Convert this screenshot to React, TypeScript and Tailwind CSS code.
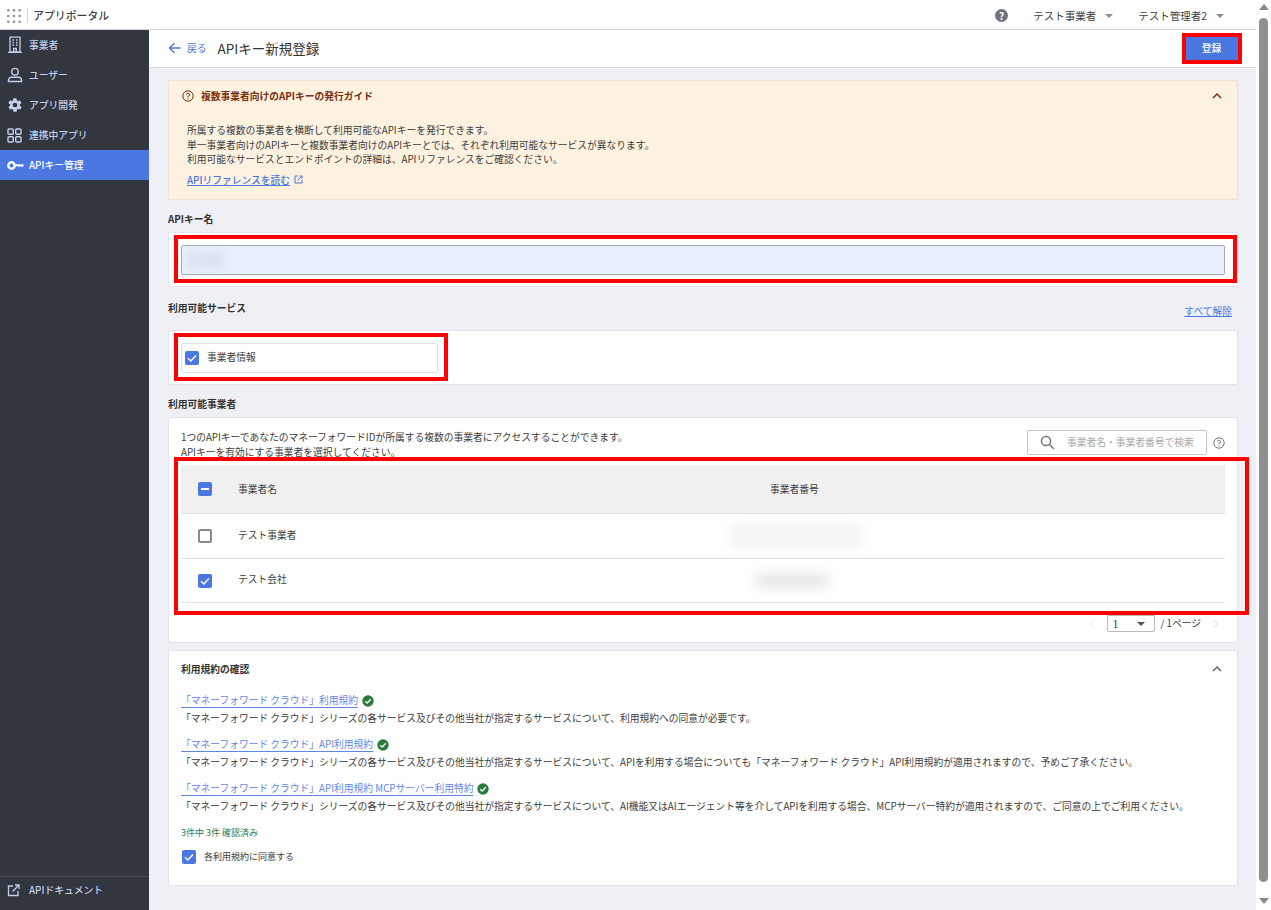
import React from "react";

const font = { fontFamily: '"Noto Sans CJK JP", "Noto Sans", sans-serif' };

function Check({ size = 14 }: { size?: number }) {
  return (
    <span className="flex shrink-0 items-center justify-center rounded-[2px] bg-[#4a78e0]" style={{ width: size, height: size }}>
      <svg width={size} height={size} viewBox="0 0 14 14" fill="none">
        <path d="M3 7.2 L5.8 10 L11 4.4" stroke="#fff" strokeWidth="1.4" />
      </svg>
    </span>
  );
}

function GreenCheck() {
  return (
    <svg width="12" height="12" viewBox="0 0 12 12" className="shrink-0">
      <circle cx="6" cy="6" r="5.7" fill="#2a7a3b" />
      <path d="M3.2 6.2 L5.2 8 L8.8 4.2" stroke="#fff" strokeWidth="1.3" fill="none" />
    </svg>
  );
}

function Caret() {
  return <span className="ml-[9px] h-0 w-0 border-x-[4px] border-t-[4px] border-x-transparent border-t-[#8a8f99]" />;
}

function Chevron({ color }: { color: string }) {
  return (
    <svg width="12" height="8" viewBox="0 0 12 8" fill="none">
      <path d="M2 6 L6 2 L10 6" stroke={color} strokeWidth="1.5" />
    </svg>
  );
}

const navItems = [
  {
    label: "事業者",
    icon: (
      <svg width="16" height="18" viewBox="0 0 16 18" fill="none" stroke="#c3cfe8" strokeWidth="1.3">
        <path d="M3 1.2 H13 V16 H3 Z M1 16.4 H15" />
        <path d="M6.7 16 V12.5 H9.3 V16" />
        <path d="M5.5 4 H7 M9 4 H10.5 M5.5 6.5 H7 M9 6.5 H10.5 M5.5 9 H7 M9 9 H10.5" />
      </svg>
    ),
  },
  {
    label: "ユーザー",
    icon: (
      <svg width="16" height="16" viewBox="0 0 16 16" fill="none" stroke="#c3cfe8" strokeWidth="1.4">
        <circle cx="8" cy="4.7" r="3.3" />
        <path d="M4.5 10.3 H11.5 A3 3 0 0 1 14.5 13.3 V14.5 H1.5 V13.3 A3 3 0 0 1 4.5 10.3 Z" />
      </svg>
    ),
  },
  {
    label: "アプリ開発",
    icon: (
      <svg width="16" height="16" viewBox="0 0 24 24" fill="#c3cfe8">
        <path d="M19.4 13a7.5 7.5 0 0 0 0-2l2.1-1.6a.5.5 0 0 0 .1-.6l-2-3.5a.5.5 0 0 0-.6-.2l-2.5 1a7.4 7.4 0 0 0-1.7-1l-.4-2.7a.5.5 0 0 0-.5-.4h-4a.5.5 0 0 0-.5.4l-.4 2.7a7.4 7.4 0 0 0-1.7 1l-2.5-1a.5.5 0 0 0-.6.2l-2 3.5a.5.5 0 0 0 .1.6L4.6 11a7.5 7.5 0 0 0 0 2l-2.1 1.6a.5.5 0 0 0-.1.6l2 3.5c.1.2.4.3.6.2l2.5-1a7.4 7.4 0 0 0 1.7 1l.4 2.7c0 .2.3.4.5.4h4c.2 0 .5-.2.5-.4l.4-2.7a7.4 7.4 0 0 0 1.7-1l2.5 1c.2.1.5 0 .6-.2l2-3.5a.5.5 0 0 0-.1-.6zM12 15.5a3.5 3.5 0 1 1 0-7 3.5 3.5 0 0 1 0 7z" />
      </svg>
    ),
  },
  {
    label: "連携中アプリ",
    icon: (
      <svg width="15" height="15" viewBox="0 0 15 15" fill="none" stroke="#c3cfe8" strokeWidth="1.4">
        <rect x="1" y="1" width="5.3" height="5.3" rx="1" />
        <rect x="8.7" y="1" width="5.3" height="5.3" rx="1" />
        <rect x="1" y="8.7" width="5.3" height="5.3" rx="1" />
        <rect x="8.7" y="8.7" width="5.3" height="5.3" rx="1" />
      </svg>
    ),
  },
];

function Sidebar() {
  return (
    <aside className="flex w-[149px] shrink-0 flex-col bg-[#31363f]">
      {navItems.map((n) => (
        <div key={n.label} className="flex h-[30px] items-center text-[9.75px] font-medium text-[#c3cfe8]">
          <span className="flex w-[29px] justify-center">{n.icon}</span>
          <span>{n.label}</span>
        </div>
      ))}
      <div className="flex h-[30px] items-center bg-[#4a78e0] text-[9.75px] font-medium text-white">
        <span className="flex w-[29px] justify-center pl-[1px]">
          <svg width="17" height="9" viewBox="0 0 17 9" fill="none">
            <circle cx="4.5" cy="4.5" r="3.2" stroke="#fff" strokeWidth="2.4" />
            <path d="M8 3.2 H16.5 V5.2 L15 6 L13.8 5.2 L12.6 6 L11.4 5.2 H8 Z" fill="#fff" />
          </svg>
        </span>
        <span>APIキー管理</span>
      </div>
      <div className="mt-auto flex h-[34px] items-center border-t border-[#464b55] pb-[6px] text-[9.75px] font-medium text-[#c3cfe8]">
        <span className="flex w-[27px] justify-center">
          <svg width="13" height="13" viewBox="0 0 13 13" fill="none" stroke="#c3cfe8" strokeWidth="1.3">
            <path d="M6 2 H1.5 V11.5 H11 V7" />
            <path d="M5.5 7.5 L12 1 M8 1 H12 V5" />
          </svg>
        </span>
        <span className="ml-[2px]">APIドキュメント</span>
      </div>
    </aside>
  );
}

function Header() {
  return (
    <header className="flex h-[30px] shrink-0 items-center border-b border-[#d4d5da] bg-white pt-[2px] text-[#3c3f45]">
      <svg width="14" height="14" viewBox="0 0 14 14" fill="#8f9198" className="ml-[7px]">
        {[1.3, 7, 12.7].flatMap((y) => [1.3, 7, 12.7].map((x) => <circle key={`${x}-${y}`} cx={x} cy={y} r="1.3" />))}
      </svg>
      <span className="ml-[6px] h-[15px] w-px bg-[#d4d5d9]" />
      <span className="ml-[5px] text-[10.9px] font-medium">アプリポータル</span>
      <span className="ml-auto flex h-[13px] w-[13px] items-center justify-center rounded-full bg-[#70747f] text-[10px] font-bold leading-none text-white">?</span>
      <span className="ml-[25px] flex items-center text-[10.5px]">テスト事業者<Caret /></span>
      <span className="ml-[25px] mr-[32px] flex items-center text-[10.5px]">テスト管理者2<Caret /></span>
    </header>
  );
}

function SubHeader() {
  return (
    <div className="relative flex h-[38px] shrink-0 items-center border-b border-[#d9dbe0] bg-white pb-[1px] pl-[19px] pr-[18px]">
      <svg width="13" height="12" viewBox="0 0 13 12" fill="none" stroke="#4a78e0" strokeWidth="1.4">
        <path d="M12.5 6 H1.5 M6.5 1 L1.5 6 L6.5 11" />
      </svg>
      <span className="ml-[6px] text-[9.75px] text-[#4a78e0]">戻る</span>
      <span className="ml-[11px] text-[13.5px] text-[#333]">APIキー新規登録</span>
      <button className="ml-auto flex h-[24px] w-[52px] items-center justify-center bg-[#4a78e0] pr-[1px] text-[9.75px] font-medium text-white">登録</button>
      <span className="absolute right-[14px] top-[3px] h-[31px] w-[60px] border-4 border-[#ff0000]" />
    </div>
  );
}

function Alert() {
  return (
    <section className="rounded-[2px] border border-[#e9e5dc] bg-[#fdf1e0] pb-[12px] pl-[18px] pr-[14px] pt-[8px] text-[9.75px] text-[#3c3c3c]">
      <div className="-ml-[5px] flex h-[14px] items-center">
        <svg width="12" height="12" viewBox="0 0 12 12" fill="none" stroke="#7a2e0e">
          <circle cx="6" cy="6" r="5.2" />
          <path d="M4.4 4.6 A1.6 1.6 0 1 1 6 6.4 V7.3 M6 8.4 V9.4" />
        </svg>
        <span className="ml-[7px] font-bold text-[#7a2e0e]">複数事業者向けのAPIキーの発行ガイド</span>
        <span className="ml-auto"><Chevron color="#7a2e0e" /></span>
      </div>
      <div className="mt-[20px] leading-[14.5px]">
        <p>所属する複数の事業者を横断して利用可能なAPIキーを発行できます。</p>
        <p>単一事業者向けのAPIキーと複数事業者向けのAPIキーとでは、それぞれ利用可能なサービスが異なります。</p>
        <p>利用可能なサービスとエンドポイントの詳細は、APIリファレンスをご確認ください。</p>
      </div>
      <div className="mt-[6px] flex items-center font-medium text-[#4a78e0]">
        <span className="underline">APIリファレンスを読む</span>
        <svg width="9" height="9" viewBox="0 0 9 9" fill="none" stroke="#4a78e0" className="ml-[4px]">
          <path d="M4 1 H1 V8 H8 V5 M3.5 5.5 L8 1 M5.5 1 H8 V3.5" />
        </svg>
      </div>
    </section>
  );
}

function NameSection() {
  return (
    <>
      <h2 className="mt-[11px] h-[16px] text-[9.75px] font-bold leading-[16px] text-[#333]">APIキー名</h2>
      <section className="relative mt-[5px] h-[55px] rounded-[2px] border border-[#e3e4e8] bg-white pl-[12px] pr-[12px] pt-[12px]">
        <div className="flex h-[30px] items-center rounded-[2px] border border-[#a3a8b3] bg-[#e8effc] pl-[5px]">
          <div className="h-[18px] w-[38px] rounded-sm bg-[#dbe2f1] blur-[4px]" />
        </div>
        <span className="absolute left-[5px] right-0 top-[2px] h-[48px] border-4 border-[#ff0000]" />
      </section>
    </>
  );
}

function ServiceSection() {
  return (
    <>
      <div className="mt-[13px] flex h-[16px] items-start justify-between">
        <h2 className="text-[9.75px] font-bold leading-[16px] text-[#333]">利用可能サービス</h2>
        <span className="mr-[6px] mt-[5px] text-[9.75px] leading-[13px] text-[#4a78e0] underline">すべて解除</span>
      </div>
      <section className="relative mt-[14px] h-[55px] rounded-[2px] border border-[#e3e4e8] bg-white pl-[12px] pt-[12px]">
        <div className="flex h-[30px] w-[257px] items-center rounded-[2px] border border-[#e0e1e5] pl-[3px] text-[9.75px] text-[#3c3c3c]">
          <Check />
          <span className="ml-[8px] pb-[1px]">事業者情報</span>
        </div>
        <span className="absolute left-[5px] top-[2px] h-[48px] w-[274px] border-4 border-[#ff0000]" />
      </section>
    </>
  );
}

function Row({ box, name, blur, last }: { box: React.ReactNode; name: string; blur: React.ReactNode; last?: boolean }) {
  return (
    <div className={last ? "flex h-[44px] items-center border-b border-[#e2e2e2] text-[9.75px] text-[#3c3c3c]" : "flex h-[45px] items-center border-b border-[#e2e2e2] text-[9.75px] text-[#3c3c3c]"}>
      <span className="flex w-[57px] pl-[17px]">{box}</span>
      <span className="w-[490px] pb-[2px]">{name}</span>
      {blur}
    </div>
  );
}

function CompanySection() {
  return (
    <>
      <h2 className="mt-[11px] h-[16px] text-[9.75px] font-bold leading-[16px] text-[#333]">利用可能事業者</h2>
      <section className="relative mt-[5px] h-[226px] rounded-[2px] border border-[#e3e4e8] bg-white px-[12px] pt-[12px]">
        <div className="flex h-[35px] items-start justify-between">
          <p className="text-[9.75px] leading-[15px] text-[#3c3c3c]">
            1つのAPIキーであなたのマネーフォワードIDが所属する複数の事業者にアクセスすることができます。<br />
            APIキーを有効にする事業者を選択してください。
          </p>
          <div className="flex items-center">
            <div className="flex h-[25px] w-[180px] items-center rounded-[2px] border border-[#c4c5c9] pl-[12px]">
              <svg width="15" height="15" viewBox="0 0 15 15" fill="none" stroke="#777" strokeWidth="1.5">
                <circle cx="6" cy="6" r="4.6" />
                <path d="M9.5 9.5 L14 14" />
              </svg>
              <span className="ml-[12px] text-[9.75px] text-[#a8a8a8]">事業者名・事業者番号で検索</span>
            </div>
            <svg width="12" height="12" viewBox="0 0 12 12" fill="none" stroke="#70747f" className="ml-[6px]">
              <circle cx="6" cy="6" r="5.2" />
              <path d="M4.4 4.6 A1.6 1.6 0 1 1 6 6.4 V7.3 M6 8.4 V9.4" />
            </svg>
          </div>
        </div>
        <div className="flex h-[49px] items-center border-b border-[#e2e2e2] bg-[#f0f0f0] text-[9.75px] text-[#3c3c3c]">
          <span className="flex w-[57px] pb-[1px] pl-[17px]">
            <span className="flex h-[14px] w-[14px] items-center justify-center rounded-[2px] bg-[#4a78e0]">
              <span className="h-[2px] w-[8px] bg-white" />
            </span>
          </span>
          <span className="w-[532px]">事業者名</span>
          <span>事業者番号</span>
        </div>
        <Row
          box={<span className="h-[14px] w-[14px] rounded-[2px] border-2 border-[#8a8a8a]" />}
          name="テスト事業者"
          blur={<div className="h-[28px] w-[135px] rounded-sm bg-[#f7f7f7] blur-[5px]" />}
        />
        <Row
          last
          box={<Check />}
          name="テスト会社"
          blur={<div className="ml-[26px] h-[15px] w-[76px] rounded-full bg-[#e8e8e8] blur-[6px]" />}
        />
        <div className="mt-[12px] flex items-center justify-end pr-[5px] text-[9.75px] text-[#3c3c3c]">
          <svg width="7" height="10" viewBox="0 0 7 10" fill="none" stroke="#e0e0e0" className="mr-[11px]"><path d="M5.5 1 L1.5 5 L5.5 9" /></svg>
          <div className="flex h-[17px] w-[48px] items-center rounded-b-[2px] border border-[#bbb] pl-[5px] pr-[9px]">
            <span className="text-[12px] leading-none" style={{ fontFamily: '"Liberation Serif", serif' }}>1</span>
            <span className="ml-auto h-0 w-0 border-x-[4px] border-t-[4px] border-x-transparent border-t-[#555]" />
          </div>
          <span className="ml-[6px]">/ 1ページ</span>
          <svg width="7" height="10" viewBox="0 0 7 10" fill="none" stroke="#e0e0e0" className="ml-[11px] mr-[1px]"><path d="M1.5 1 L5.5 5 L1.5 9" /></svg>
        </div>
        <span className="absolute -right-[12px] left-[5px] top-[39px] h-[158px] border-4 border-[#ff0000]" />
      </section>
    </>
  );
}

const M = "「マネーフォワード クラウド」";
const terms = [
  { link: `${M}利用規約`, text: `${M}シリーズの各サービス及びその他当社が指定するサービスについて、利用規約への同意が必要です。` },
  { link: `${M}API利用規約`, text: `${M}シリーズの各サービス及びその他当社が指定するサービスについて、APIを利用する場合についても${M}API利用規約が適用されますので、予めご了承ください。` },
  { link: `${M}API利用規約 MCPサーバー利用特約`, text: `${M}シリーズの各サービス及びその他当社が指定するサービスについて、AI機能又はAIエージェント等を介してAPIを利用する場合、MCPサーバー特約が適用されますので、ご同意の上でご利用ください。` },
];

function TermsSection() {
  return (
    <section className="mt-[7px] h-[236px] rounded-[2px] border border-[#e3e4e8] bg-white pl-[12px] pr-[14px] pt-[9px] text-[9.75px] text-[#3c3c3c]">
      <div className="flex h-[18px] items-center justify-between">
        <h2 className="font-bold text-[#333]">利用規約の確認</h2>
        <Chevron color="#666" />
      </div>
      <div className="mt-[15px] flex flex-col gap-[12px]">
        {terms.map((t) => (
          <div key={t.link}>
            <div className="flex h-[16px] items-center">
              <span className="border-b border-[#5f87e6] leading-[13px] text-[#5f87e6]">{t.link}</span>
              <span className="ml-[4px]"><GreenCheck /></span>
            </div>
            <p className="mt-[2px] h-[14px] leading-[14px]">{t.text}</p>
          </div>
        ))}
      </div>
      <p className="mt-[13px] h-[14px] text-[9px] leading-[14px] text-[#2a7a5b]">3件中 3件 確認済み</p>
      <div className="mt-[10px] flex items-center pl-[1px]">
        <Check />
        <span className="ml-[8px] text-[9px]">各利用規約に同意する</span>
      </div>
    </section>
  );
}

function Scrollbar() {
  return (
    <div className="flex w-[15px] shrink-0 flex-col items-center bg-white pt-[4px]">
      <span className="h-0 w-0 border-x-[5px] border-b-[6px] border-x-transparent border-b-[#8a8a8a]" />
      <span className="mt-[8px] h-[864px] w-[9px] rounded-[4.5px] bg-[#8f8f8f]" />
      <span className="mt-[16px] h-0 w-0 border-x-[5px] border-t-[6px] border-x-transparent border-t-[#8a8a8a]" />
    </div>
  );
}

export default function App() {
  return (
    <div className="flex h-[910px] w-[1271px] overflow-hidden bg-[#eef0f5]" style={font}>
      <div className="flex min-w-0 flex-1 flex-col">
        <Header />
        <div className="flex min-h-0 flex-1">
          <Sidebar />
          <main className="flex min-w-0 flex-1 flex-col">
            <SubHeader />
            <div className="flex flex-1 flex-col pl-[19px] pr-[18px] pt-[12px]">
              <Alert />
              <NameSection />
              <ServiceSection />
              <CompanySection />
              <TermsSection />
            </div>
          </main>
        </div>
      </div>
      <Scrollbar />
    </div>
  );
}
